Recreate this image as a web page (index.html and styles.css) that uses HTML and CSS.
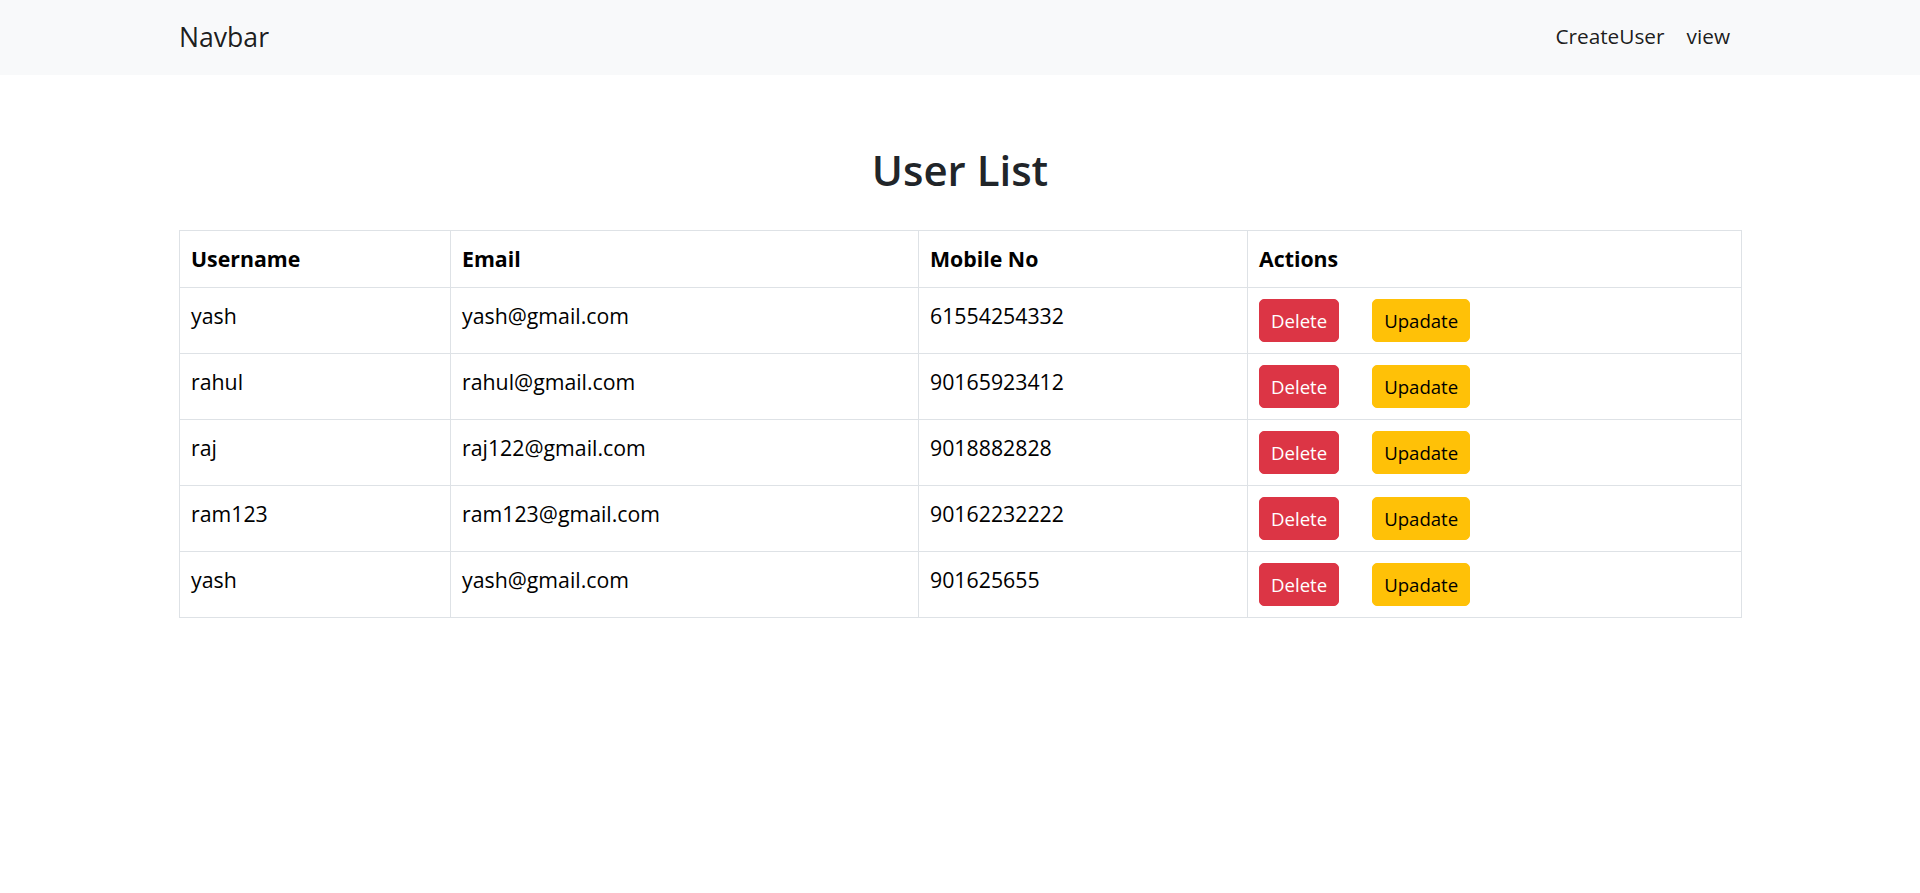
FILE: index.html
```html
<!DOCTYPE html>
<html lang="en">
<head>
<meta charset="utf-8">
<title>User List</title>
<link rel="stylesheet" href="styles.css">
</head>
<body>
<nav class="navbar">
  <div class="container nav-inner">
    <a class="brand" href="#">Navbar</a>
    <ul class="nav-links">
      <li><a class="nav-link" href="#">CreateUser</a></li>
      <li><a class="nav-link" href="#">view</a></li>
    </ul>
  </div>
</nav>
<main class="container main">
  <h2 class="title">User List</h2>
  <table class="users">
    <colgroup>
      <col class="c-user">
      <col class="c-email">
      <col class="c-mobile">
      <col class="c-actions">
    </colgroup>
    <thead>
      <tr><th>Username</th><th>Email</th><th>Mobile No</th><th>Actions</th></tr>
    </thead>
    <tbody>
      <tr><td>yash</td><td>yash@gmail.com</td><td>61554254332</td><td><div class="actions"><button class="btn btn-danger">Delete</button><button class="btn btn-warning">Upadate</button></div></td></tr>
      <tr><td>rahul</td><td>rahul@gmail.com</td><td>90165923412</td><td><div class="actions"><button class="btn btn-danger">Delete</button><button class="btn btn-warning">Upadate</button></div></td></tr>
      <tr><td>raj</td><td>raj122@gmail.com</td><td>9018882828</td><td><div class="actions"><button class="btn btn-danger">Delete</button><button class="btn btn-warning">Upadate</button></div></td></tr>
      <tr><td>ram123</td><td>ram123@gmail.com</td><td>90162232222</td><td><div class="actions"><button class="btn btn-danger">Delete</button><button class="btn btn-warning">Upadate</button></div></td></tr>
      <tr><td>yash</td><td>yash@gmail.com</td><td>901625655</td><td><div class="actions"><button class="btn btn-danger">Delete</button><button class="btn btn-warning">Upadate</button></div></td></tr>
    </tbody>
  </table>
</main>
</body>
</html>
```
FILE: styles.css
```css
* { box-sizing: border-box; }

body {
  margin: 0;
  font-family: "Open Sans", "Noto Sans", sans-serif;
  font-size: 21.3px;
  line-height: 33px;
  color: #212529;
  background: #fff;
}

.container {
  width: 1562px;
  margin: 0 auto;
}

.navbar {
  background: #f8f9fa;
  height: 75px;
}

.nav-inner {
  height: 75px;
  display: flex;
  align-items: center;
  justify-content: space-between;
}

.brand {
  font-size: 26.6px;
  line-height: 40px;
  color: rgba(0, 0, 0, 0.9);
  text-decoration: none;
  margin-bottom: 2px;
}

.nav-links {
  list-style: none;
  margin: 0 0 3px;
  padding: 0;
  display: flex;
}

.nav-link {
  display: block;
  padding: 0 11px;
  font-size: 20.8px;
  line-height: 32px;
  color: rgba(0, 0, 0, 0.9);
  text-decoration: none;
}

.main {
  padding-top: 70px;
}

.title {
  margin: 0 0 35px;
  font-size: 42px;
  line-height: 50px;
  font-weight: 600;
  text-align: center;
  color: #212529;
}

.users {
  width: 100%;
  table-layout: fixed;
  border-collapse: collapse;
  border: 1px solid #dee2e6;
  color: #000;
}

.c-user { width: 271px; }
.c-email { width: 468px; }
.c-mobile { width: 329px; }
.c-actions { width: 494px; }

.users th,
.users td {
  border: 1px solid #dee2e6;
  padding: 11px;
  text-align: left;
  vertical-align: top;
}

.users th {
  font-weight: 700;
  padding-bottom: 12px;
}

.actions {
  display: flex;
  gap: 33px;
}

.btn {
  font-family: "Open Sans", "Noto Sans", sans-serif;
  font-size: 18.6px;
  line-height: 29px;
  padding: 6px 11px;
  border: 1px solid transparent;
  border-radius: 5px;
  cursor: pointer;
}

.btn-danger {
  background: #dc3545;
  border-color: #dc3545;
  color: #fff;
}

.btn-warning {
  background: #ffc107;
  border-color: #ffc107;
  color: #000;
}
```
